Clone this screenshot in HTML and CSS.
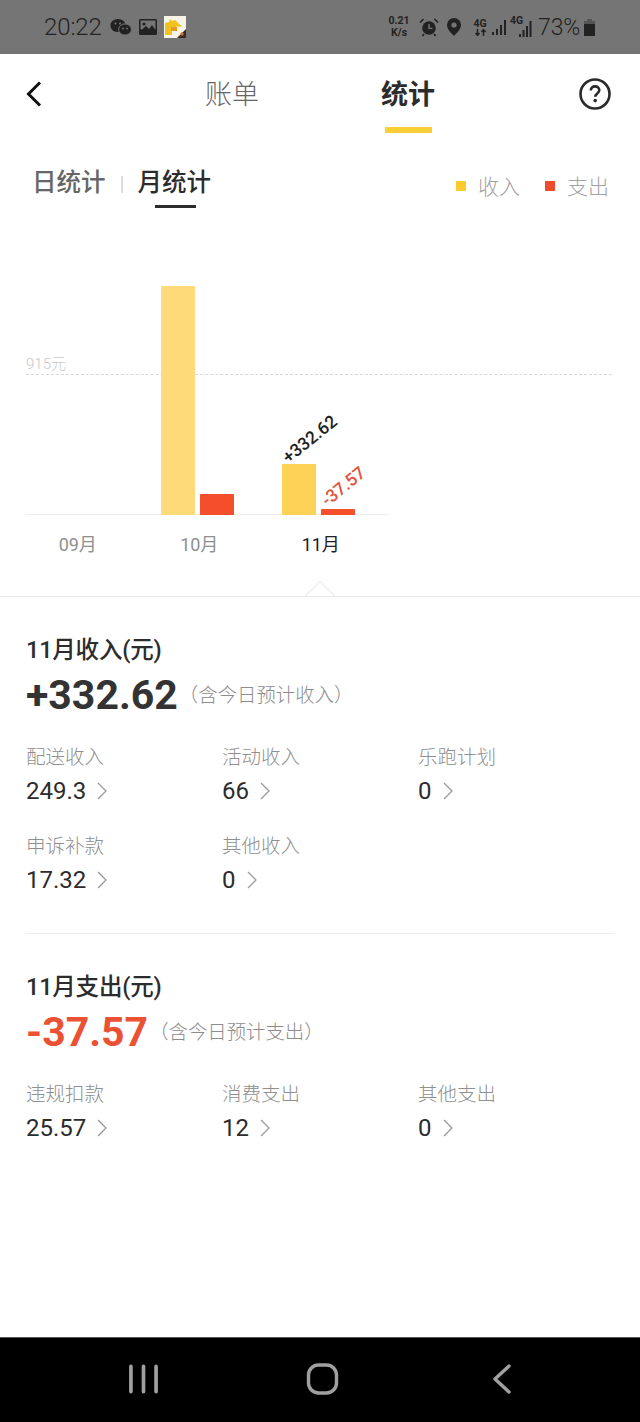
FILE: index.html
```html
<!DOCTYPE html>
<html lang="zh-CN">
<head>
<meta charset="utf-8">
<title>统计</title>
<link rel="stylesheet" href="styles.css">
</head>
<body>
<div class="page">
  <header class="status">
    <div class="status-left">
      <span class="clock">20:22</span>
      <svg class="ic-wechat" viewBox="0 0 22 18"><ellipse cx="8" cy="7.5" rx="7.6" ry="6.6" fill="#222"/><ellipse cx="15" cy="11.5" rx="6.4" ry="5.6" fill="#222" stroke="#757575" stroke-width="1"/><circle cx="5.5" cy="5.5" r="1" fill="#757575"/><circle cx="10" cy="5.5" r="1" fill="#757575"/><circle cx="13" cy="10.5" r=".9" fill="#757575"/><circle cx="17" cy="10.5" r=".9" fill="#757575"/></svg>
      <svg class="ic-image" viewBox="0 0 18 16"><rect width="18" height="16" rx="1.5" fill="#222"/><rect x="1.5" y="1.5" width="15" height="9" fill="#757575"/><circle cx="5" cy="5" r="1.6" fill="#222"/><path d="M1.5 12 7 7l3 3 3-4 3.5 5v2h-15z" fill="#222"/></svg>
      <svg class="ic-app" viewBox="0 0 22 22"><rect width="22" height="22" fill="#f6f4e8"/><path d="M1 19V7l4-1 1-3 2 2 3-1 4 4 3 2-3 1-2-1-2 2H8v7z" fill="#f2c21c"/><rect x="7" y="11" width="6" height="4" fill="#e59a1f"/><path d="M22 13v9H13z" fill="#3a2a20"/><circle cx="18" cy="18" r="1.7" fill="#c9772d"/></svg>
    </div>
    <div class="status-right">
      <span class="speed"><b>0.21</b><b>K/s</b></span>
      <svg class="ic-alarm" viewBox="0 0 20 19"><circle cx="10" cy="10" r="6.8" fill="#222"/><path d="M10 6v4.4h3.4" fill="none" stroke="#757575" stroke-width="1.4"/><path d="M1 4.5 4.5 1M19 4.5 15.5 1M5 16l-1.6 2M15 16l1.6 2" stroke="#222" stroke-width="1.7" fill="none"/></svg>
      <svg class="ic-pin" viewBox="0 0 14 18"><path fill-rule="evenodd" d="M7 0a7 7 0 0 1 7 7c0 4-4 8-7 11-3-3-7-7-7-11a7 7 0 0 1 7-7zm0 4.4a2.6 2.6 0 1 0 0 5.2 2.6 2.6 0 0 0 0-5.2z" fill="#222"/></svg>
      <span class="net"><b>4G</b><svg viewBox="0 0 12 7"><path d="M3 0v6M1 4l2 2.4L5 4M9 7V1M7 3l2-2.4L11 3" fill="none" stroke="#222" stroke-width="1.5"/></svg></span>
      <svg class="ic-signal" viewBox="0 0 17 17"><path d="M1 13h2v3H1zM5 10h2v6H5zM9 6h2v10H9zM13 1h2v15h-2z" fill="#222"/></svg>
      <span class="sim2"><b>4G</b><svg viewBox="0 0 14 17"><path d="M1 13h2v3H1zM4.500 9h2v7h-2zM8 5h2v11H8zM11.500 0h2v16h-2z" fill="#222"/></svg></span>
      <span class="pct">73%</span>
      <svg class="ic-batt" viewBox="0 0 12 17"><path d="M3.500 0h5v2h3v15H.5V2h3z" fill="#222"/><path d="M3.500 0h5v2h3v3H.5V2h3z" fill="#555"/></svg>
    </div>
  </header>

  <nav class="topnav">
    <svg class="back" viewBox="0 0 18 28"><path d="M15 2.500 3.500 14 15 25.500" fill="none" stroke="#111" stroke-width="3"/></svg>
    <div class="tabs">
      <span class="tab">账单</span>
      <span class="tab tab-on">统计</span>
    </div>
    <svg class="help" viewBox="0 0 32 32"><circle cx="16" cy="16" r="14.500" fill="none" stroke="#2a2a2a" stroke-width="2.600"/><path d="M11.800 12.600c0-2.600 1.900-4.200 4.300-4.200s4.200 1.500 4.200 3.800c0 3.200-4 3.400-4 6.600" fill="none" stroke="#2a2a2a" stroke-width="2.600"/><circle cx="16.200" cy="22.600" r="1.800" fill="#2a2a2a"/></svg>
  </nav>

  <section class="subbar">
    <div class="subtabs">
      <span class="sub">日统计</span>
      <i class="sub-sep"></i>
      <span class="sub sub-on">月统计</span>
    </div>
    <div class="legend">
      <span class="dot dot-y"></span><span class="leg-txt">收入</span>
      <span class="dot dot-r"></span><span class="leg-txt">支出</span>
    </div>
  </section>

  <section class="chart">
    <div class="plot">
      <div class="guide"><span>915元</span></div>
      <div class="group"></div>
      <div class="group">
        <div class="bar bar-soft h-229"></div>
        <div class="bar bar-red h-21"></div>
      </div>
      <div class="group">
        <div class="bar bar-yellow h-51"><span class="tilt tilt-in">+332.62</span></div>
        <div class="bar bar-red h-6"><span class="tilt tilt-out">-37.57</span></div>
      </div>
    </div>
    <div class="months">
      <span>09月</span><span>10月</span><span class="m-on">11月</span>
    </div>
    <div class="caret"></div>
  </section>

  <section class="block block-in">
    <h2 class="b-title">11月收入(元)</h2>
    <div class="b-sum"><span class="num">+332.62</span><span class="note">（含今日预计收入）</span></div>
    <div class="grid">
      <div class="cell"><span class="lab">配送收入</span><span class="val">249.3<svg class="chev" viewBox="0 0 10 18"><path d="M1 1l8 8-8 8" fill="none" stroke="#9a9a9a" stroke-width="1.300"/></svg></span></div>
      <div class="cell"><span class="lab">活动收入</span><span class="val">66<svg class="chev" viewBox="0 0 10 18"><path d="M1 1l8 8-8 8" fill="none" stroke="#9a9a9a" stroke-width="1.300"/></svg></span></div>
      <div class="cell"><span class="lab">乐跑计划</span><span class="val">0<svg class="chev" viewBox="0 0 10 18"><path d="M1 1l8 8-8 8" fill="none" stroke="#9a9a9a" stroke-width="1.300"/></svg></span></div>
      <div class="cell"><span class="lab">申诉补款</span><span class="val">17.32<svg class="chev" viewBox="0 0 10 18"><path d="M1 1l8 8-8 8" fill="none" stroke="#9a9a9a" stroke-width="1.300"/></svg></span></div>
      <div class="cell"><span class="lab">其他收入</span><span class="val">0<svg class="chev" viewBox="0 0 10 18"><path d="M1 1l8 8-8 8" fill="none" stroke="#9a9a9a" stroke-width="1.300"/></svg></span></div>
    </div>
  </section>

  <div class="rule"></div>

  <section class="block block-out">
    <h2 class="b-title">11月支出(元)</h2>
    <div class="b-sum"><span class="num num-red">-37.57</span><span class="note">（含今日预计支出）</span></div>
    <div class="grid">
      <div class="cell"><span class="lab">违规扣款</span><span class="val">25.57<svg class="chev" viewBox="0 0 10 18"><path d="M1 1l8 8-8 8" fill="none" stroke="#9a9a9a" stroke-width="1.300"/></svg></span></div>
      <div class="cell"><span class="lab">消费支出</span><span class="val">12<svg class="chev" viewBox="0 0 10 18"><path d="M1 1l8 8-8 8" fill="none" stroke="#9a9a9a" stroke-width="1.300"/></svg></span></div>
      <div class="cell"><span class="lab">其他支出</span><span class="val">0<svg class="chev" viewBox="0 0 10 18"><path d="M1 1l8 8-8 8" fill="none" stroke="#9a9a9a" stroke-width="1.300"/></svg></span></div>
    </div>
  </section>

  <footer class="sysnav">
    <svg class="sys-recent" viewBox="0 0 30 30"><path d="M2 2v26M15 2v26M28 2v26" stroke="#a0a0a0" stroke-width="3.800" stroke-linecap="round"/></svg>
    <svg class="sys-home" viewBox="0 0 32 32"><rect x="2" y="2" width="28" height="28" rx="10" fill="none" stroke="#a0a0a0" stroke-width="3.400"/></svg>
    <svg class="sys-back" viewBox="0 0 20 30"><path d="M17 2 3 15l14 13" fill="none" stroke="#a0a0a0" stroke-width="3.400" stroke-linecap="round" stroke-linejoin="round"/></svg>
  </footer>
</div>
</body>
</html>
```

FILE: styles.css
```css
* { box-sizing: border-box; }
html, body { margin: 0; padding: 0; background: #fff; }
body { font-family: Roboto, "Noto Sans CJK SC", sans-serif; color: #2c2c2c; }
.page { width: 640px; height: 1422px; display: flex; flex-direction: column; overflow: hidden; }

/* status bar */
.status { height: 54px; background: #757575; display: flex; justify-content: space-between; align-items: center; padding: 0 44px; color: #222; flex: none; }
.status-left, .status-right { display: flex; align-items: center; }
.clock { font-size: 24px; font-weight: 300; letter-spacing: -.1px; width: 66px; }
.ic-wechat { width: 22px; height: 18px; }
.ic-image { width: 18px; height: 16px; margin-left: 7px; }
.ic-app { width: 22px; height: 22px; margin-left: 7px; }
.speed { display: flex; flex-direction: column; align-items: center; font-size: 10.5px; width: 24px; }
.speed b { font-weight: 700; line-height: 12.5px; display: block; }
.ic-alarm { width: 20px; height: 19px; margin-left: 8px; }
.ic-pin { width: 14px; height: 18px; margin-left: 8px; }
.net { display: flex; flex-direction: column; align-items: center; width: 14px; margin-left: 12px; font-size: 10.5px; line-height: 10px; }
.net svg { width: 13px; height: 7px; }
.ic-signal { width: 17px; height: 17px; margin-left: 4px; }
.sim2 { position: relative; width: 22px; height: 22px; margin-left: 2px; font-size: 10.5px; line-height: 10px; }
.sim2 svg { position: absolute; right: 0; bottom: 0; width: 14px; height: 17px; }
.pct { font-size: 23px; font-weight: 300; margin-left: 6px; letter-spacing: -.2px; }
.ic-batt { width: 13px; height: 17px; margin-left: 3px; }

/* top nav */
.topnav { height: 80px; position: relative; flex: none; }
.tabs { display: flex; padding-left: 205px; gap: 122px; }
.tab { font-size: 27px; line-height: 40px; margin-top: 21px; color: #666; font-weight: 300; position: relative; }
.tab-on { color: #2c2c2c; font-weight: 700; }
.tab-on::after { content: ""; position: absolute; left: 4px; top: 52px; width: 47px; height: 6px; background: #f9cf35; }
.back { position: absolute; left: 25px; top: 26px; width: 18px; height: 28px; }
.help { position: absolute; left: 579px; top: 24px; width: 32px; height: 32px; }

/* subtabs */
.subbar { display: flex; justify-content: space-between; padding: 34px 31px 0 32px; height: 76px; flex: none; }
.subtabs { display: flex; align-items: flex-start; }
.sub { font-size: 24.5px; line-height: 30px; font-weight: 500; color: #666; position: relative; }
.sub-on { color: #2c2c2c; }
.sub-on::after { content: ""; position: absolute; left: 17px; top: 37px; width: 41px; height: 3px; background: #2c2c2c; }
.sub-sep { width: 2px; height: 17px; background: #dcdcdc; margin: 8px 15px 0; }
.legend { display: flex; align-items: center; height: 34px; margin-top: 2px; font-size: 21px; color: #a2a2a2; }
.leg-txt { font-weight: 300; line-height: 34px; }
.leg-txt + .dot { margin-left: 25px; }
.dot { width: 10px; height: 10px; margin: -2px 12px 0 1px; }
.dot-y { background: #fbcb2c; }
.dot-r { background: #ef4c2b; }

/* chart */
.chart { position: relative; height: 387px; flex: none; }
.plot { position: absolute; left: 0; top: 0; width: 388px; height: 305px; padding-left: 15.5px; display: grid; grid-template-columns: repeat(3, 121px); }
.plot::after { content: ""; position: absolute; left: 26px; right: 0; bottom: 0; height: 1px; background: #ececec; }
.guide { position: absolute; left: 26px; top: 164px; width: 586px; border-top: 1px dashed #d8d8d8; }
.guide span { position: absolute; left: 0; top: -21px; font-size: 15px; line-height: 20px; color: #c9c9c9; font-weight: 300; }
.group { display: flex; justify-content: center; align-items: flex-end; gap: 5px; position: relative; z-index: 1; }
.bar { width: 34px; position: relative; border-radius: 1px 1px 0 0; }
.bar-soft { background: #fedb78; }
.bar-yellow { background: #fdd257; }
.bar-red { background: #f44e2c; }
.h-229 { height: 229px; }
.h-51 { height: 51px; }
.h-21 { height: 21px; }
.h-6 { height: 6px; }
.tilt { position: absolute; bottom: 100%; font-size: 17.5px; line-height: 20px; white-space: nowrap; transform-origin: 0 100%; transform: rotate(-39deg); font-weight: 500; }
.tilt-in { color: #222; left: 9px; bottom: calc(100% - 3px); }
.tilt-out { color: #e2543a; left: 9px; bottom: calc(100% - 1px); }
.months { position: absolute; left: 17px; top: 321px; display: grid; grid-template-columns: repeat(3, 121.5px); text-align: center; font-size: 18px; line-height: 28px; color: #8f8f8f; }
.m-on { color: #222; }
.caret { position: absolute; left: 0; right: 0; bottom: 0; height: 1px; background: #e9e9e9; }
.caret::after { content: ""; position: absolute; left: 309px; top: -11px; width: 21px; height: 21px; background: #fff; border-left: 1px solid #e4e4e4; border-top: 1px solid #e4e4e4; transform: rotate(45deg); clip-path: polygon(0 0, 100% 0, 0 100%); }

/* data blocks */
.block { padding: 0 26px; flex: none; }
.block-in { padding-top: 36px; height: 336px; }
.block-out { padding-top: 36px; }
.b-title { margin: 0; font-size: 23.5px; line-height: 34px; font-weight: 500; color: #2c2c2c; letter-spacing: -.2px; }
.b-sum { display: flex; align-items: center; height: 52px; margin-top: 2px; }
.num { font-size: 41px; font-weight: 700; line-height: 52px; color: #333; }
.num-red { color: #ea5233; }
.note { font-size: 19.4px; font-weight: 300; color: #8c8c8c; margin-left: 1px; margin-top: -4px; }
.grid { display: grid; grid-template-columns: repeat(3, 196px); grid-auto-rows: 89px; margin-top: 22px; }
.cell { display: flex; flex-direction: column; }
.lab { font-size: 19.5px; line-height: 30px; font-weight: 300; color: #8f8f8f; }
.val { display: flex; align-items: center; font-size: 24px; line-height: 36px; color: #2c2c2c; }
.chev { width: 10px; height: 18px; margin-left: 11px; }
.rule { height: 1px; margin: 0 26px; background: #ececec; flex: none; }

/* system nav */
.sysnav { margin-top: auto; height: 85px; background: #000; flex: none; position: relative; display: flex; border-top: 1px solid #555; }
.sys-recent { position: absolute; left: 129px; top: 26px; width: 29px; height: 30px; }
.sys-home { position: absolute; left: 306px; top: 25px; width: 33px; height: 32px; }
.sys-back { position: absolute; left: 492px; top: 26px; width: 20px; height: 30px; }
```
